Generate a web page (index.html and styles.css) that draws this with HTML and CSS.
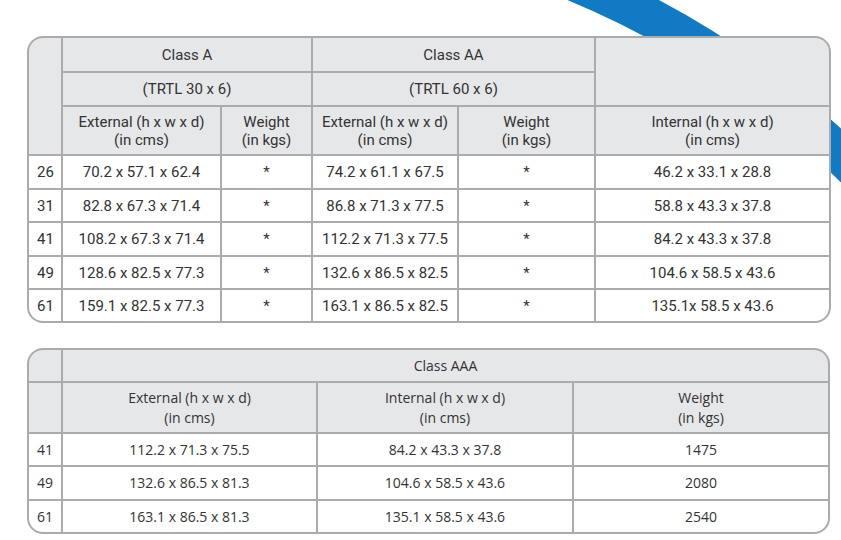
FILE: index.html
```html
<!DOCTYPE html>
<html>
<head>
<meta charset="utf-8">
<link rel="stylesheet" href="styles.css">
</head>
<body>
<svg class="arc" width="841" height="540" viewBox="0 0 841 540" aria-hidden="true">
  <circle cx="243" cy="783" r="867" fill="none" stroke="#117ac4" stroke-width="39"/>
</svg>
<main class="page">
  <div class="tbl tbl-a">
    <div class="c hd span-row3"></div>
    <div class="c hd span2">Class A</div>
    <div class="c hd span2">Class AA</div>
    <div class="c hd span-row2"></div>
    <div class="c hd span2">(TRTL 30 x 6)</div>
    <div class="c hd span2">(TRTL 60 x 6)</div>
    <div class="c hd">External (h x w x d)<br>(in cms)</div>
    <div class="c hd">Weight<br>(in kgs)</div>
    <div class="c hd">External (h x w x d)<br>(in cms)</div>
    <div class="c hd">Weight<br>(in kgs)</div>
    <div class="c hd">Internal (h x w x d)<br>(in cms)</div>

    <div class="c num">26</div><div class="c">70.2 x 57.1 x 62.4</div><div class="c">*</div><div class="c">74.2 x 61.1 x 67.5</div><div class="c">*</div><div class="c">46.2 x 33.1 x 28.8</div>
    <div class="c num">31</div><div class="c">82.8 x 67.3 x 71.4</div><div class="c">*</div><div class="c">86.8 x 71.3 x 77.5</div><div class="c">*</div><div class="c">58.8 x 43.3 x 37.8</div>
    <div class="c num">41</div><div class="c">108.2 x 67.3 x 71.4</div><div class="c">*</div><div class="c">112.2 x 71.3 x 77.5</div><div class="c">*</div><div class="c">84.2 x 43.3 x 37.8</div>
    <div class="c num">49</div><div class="c">128.6 x 82.5 x 77.3</div><div class="c">*</div><div class="c">132.6 x 86.5 x 82.5</div><div class="c">*</div><div class="c">104.6 x 58.5 x 43.6</div>
    <div class="c num">61</div><div class="c">159.1 x 82.5 x 77.3</div><div class="c">*</div><div class="c">163.1 x 86.5 x 82.5</div><div class="c">*</div><div class="c">135.1x 58.5 x 43.6</div>
  </div>

  <div class="tbl tbl-b">
    <div class="c hd"></div>
    <div class="c hd span3">Class AAA</div>
    <div class="c hd"></div>
    <div class="c hd">External (h x w x d)<br>(in cms)</div>
    <div class="c hd">Internal (h x w x d)<br>(in cms)</div>
    <div class="c hd">Weight<br>(in kgs)</div>

    <div class="c num">41</div><div class="c">112.2 x 71.3 x 75.5</div><div class="c">84.2 x 43.3 x 37.8</div><div class="c">1475</div>
    <div class="c num">49</div><div class="c">132.6 x 86.5 x 81.3</div><div class="c">104.6 x 58.5 x 43.6</div><div class="c">2080</div>
    <div class="c num">61</div><div class="c">163.1 x 86.5 x 81.3</div><div class="c">135.1 x 58.5 x 43.6</div><div class="c">2540</div>
  </div>
</main>
</body>
</html>
```

FILE: styles.css
```css
html, body {
  margin: 0;
  padding: 0;
  background: #ffffff;
}

body {
  position: relative;
  width: 841px;
  height: 540px;
  overflow: hidden;
}

.arc {
  position: absolute;
  left: 0;
  top: 0;
  z-index: 0;
}

.page {
  position: relative;
  z-index: 1;
  padding: 36px 0 0 27px;
  display: flex;
  flex-direction: column;
  gap: 25px;
}

.tbl {
  display: grid;
  gap: 2px;
  background: #ababab;
  border: 2px solid #ababab;
  border-radius: 16px;
  overflow: hidden;
  color: #333333;
}

.tbl-a {
  width: 800px;
  font-family: Roboto, "Liberation Sans", sans-serif;
  font-size: 15px;
  line-height: 18px;
  grid-template-columns: 32px 157px 89px 144px 135px 233px;
  grid-template-rows: 33px 32px 47px 32px 31px 32px 31px 31px;
}

.tbl-b {
  width: 799px;
  font-family: "Open Sans", "Liberation Sans", sans-serif;
  font-size: 14px;
  line-height: 20px;
  grid-template-columns: 32px 253px 254px 254px;
  grid-template-rows: 31px 49px 31px 32px 31px;
}

.c {
  background: #ffffff;
  display: flex;
  align-items: center;
  justify-content: center;
  text-align: center;
}

.c.hd {
  background: #e6e7e9;
}

.c.num {
  justify-content: flex-start;
  padding-left: 8px;
}

.span2 {
  grid-column: span 2;
}

.span3 {
  grid-column: span 3;
}

.span-row3 {
  grid-row: span 3;
}

.span-row2 {
  grid-row: span 2;
}
```
